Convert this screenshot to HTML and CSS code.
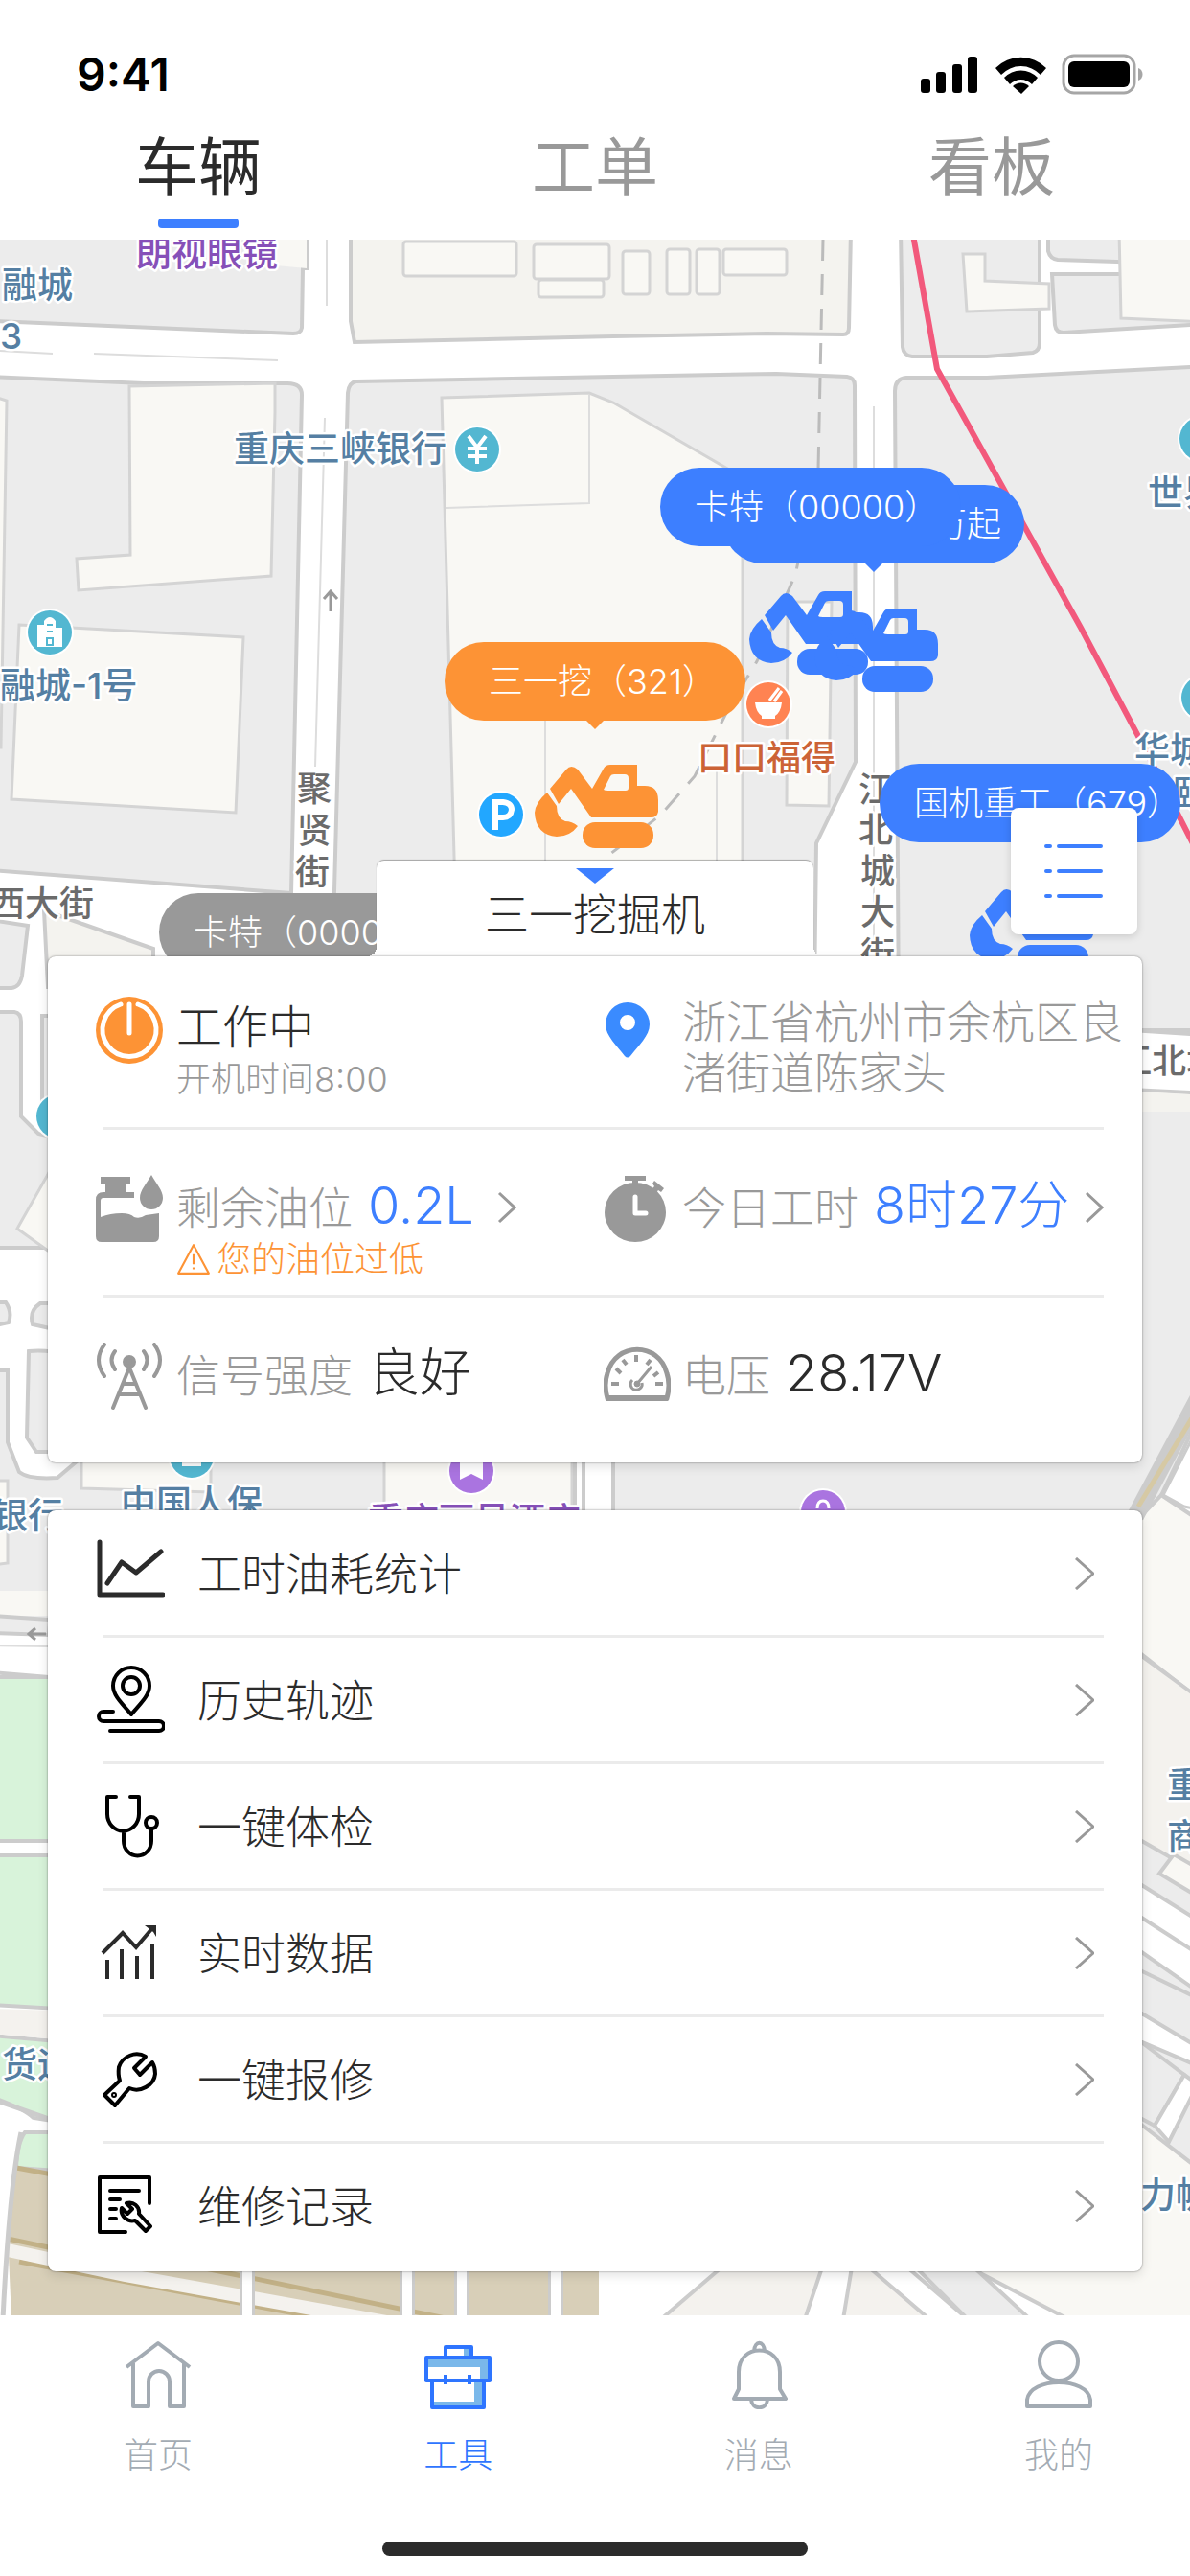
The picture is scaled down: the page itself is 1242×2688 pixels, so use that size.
FILE: index.html
```html
<!DOCTYPE html>
<html lang="zh-CN">
<head>
  <meta charset="UTF-8">
  <meta name="viewport" content="width=device-width, initial-scale=1.0">
  <title>车辆</title>
  <link rel="stylesheet" href="styles.css">
</head>
<body>
  <header class="header">
    <div class="status-bar">
      <span class="time">9:41</span>
      <svg class="status-icons" viewBox="0 0 234 44" aria-hidden="true">
        <rect x="0" y="26" width="10" height="15" rx="3"/>
        <rect x="16" y="19" width="10" height="22" rx="3"/>
        <rect x="33" y="11" width="10" height="30" rx="3"/>
        <rect x="49" y="3" width="10" height="38" rx="3"/>
        <path d="M78 15a37 37 0 0 1 53 0l-6 7a28 28 0 0 0-41 0z"/>
        <path d="M87 25a24 24 0 0 1 35 0l-6 7a16 16 0 0 0-23 0z"/>
        <path d="M96 34a12 12 0 0 1 17 0l-8 8z"/>
        <rect x="149" y="2" width="74" height="39" rx="11" fill="none" stroke="#a6a6a6" stroke-width="3"/>
        <rect x="154" y="8" width="64" height="27" rx="6"/>
        <path d="M227 15c6 2 6 11 0 13z" fill="#a6a6a6"/>
      </svg>
    </div>
    <nav class="tabs">
      <a class="tab active" href="#vehicle">车辆</a>
      <a class="tab" href="#order">工单</a>
      <a class="tab" href="#board">看板</a>
    </nav>
  </header>

  <main class="main">
    <div class="map">
      <svg class="map-canvas" viewBox="0 250 1242 2166" preserveAspectRatio="xMidYMid slice" aria-hidden="true">
        <defs>
          <g id="pin-bg"><circle r="25" fill="#fff"/><circle r="23"/></g>
        </defs>
        <rect y="250" width="1242" height="2166" fill="#fff"/>

        <!-- blocks -->
        <g class="block">
          <path d="M-9 240H321V280H316L315 342Q314 348 306 348L-9 335z"/>
          <path class="pale" d="M366 240V335L370 357L640 351L800 348L880 349Q886 349 886 342L888 240z"/>
          <path d="M-9 393L150 400H300Q315 400 315 412L304 932L-9 908z"/>
          <path d="M363 410Q364 399 372 398L640 393L810 390L884 393Q892 394 892 402L893 795L852 880L850 1040H346z"/>
          <path d="M934 408Q934 395 946 394H1030L1260 382V1075H938z"/>
          <path d="M940 240L942 362Q943 371 952 372H1030L1078 368Q1085 366 1085 358V240z"/>
          <path d="M1094 240V262Q1096 270 1104 271L1260 276V240z"/>
          <path d="M1098 286H1260V338L1110 347Q1102 347 1101 339z"/>
          <path d="M900 1137H1260V1460L1150 1690H380V1500z"/>
          <path d="M-9 960L29 966L23 1018Q21 1030 12 1031H-9z"/>
          <path class="pale" d="M46 950L160 990V1030H50z"/>
          <path d="M-9 1056H15Q22 1057 22 1066V1165L40 1183L70 1190V1302H-9z"/>
          <path d="M44 1060H70V1170H44z"/>
          <path d="M-9 1359H6Q13 1369 9 1380L-9 1384zM42 1360H70V1390L34 1382Q30 1368 42 1360z"/>
          <path d="M30 1410Q50 1408 70 1414V1515H38L28 1500z"/>
          <path d="M-9 1430H8V1505L20 1536Q30 1544 60 1542L86 1520H600V1600H60L51 1706L-9 1704z"/>
          <path d="M1170 1700L1260 1750V2600H1100z"/>
        </g>

        <!-- buildings -->
        <g class="building">
          <path class="flat" d="M288 250H320V280L288 277z"/>
          <rect x="421" y="252" width="118" height="36" rx="3"/>
          <rect x="557" y="255" width="79" height="36" rx="3"/>
          <rect x="562" y="292" width="68" height="18" rx="3"/>
          <rect x="650" y="262" width="28" height="45" rx="3"/>
          <rect x="696" y="260" width="24" height="47" rx="3"/>
          <rect x="727" y="260" width="24" height="47" rx="3"/>
          <rect x="755" y="260" width="66" height="27" rx="3"/>
          <path d="M135 403L287 400V430L283 601L82 616L80 583L136 579z"/>
          <path d="M20 652L254 665L246 848L12 834z"/>
          <path d="M-9 413L7 418L1 780H-9z"/>
          <path d="M461 415L615 410L640 420L775 498V930H475z"/>
          <path class="thin" d="M615 412V525L466 530M569 750V900M748 800V900"/>
          <path d="M822 628H868L865 841L821 840z"/>
          <path d="M1005 265H1028V293L1095 296V322L1009 325z"/>
          <path d="M1168 240H1260V336L1170 332z"/>
          <path d="M70 1190L18 1282L50 1305L80 1310z"/>
          <path d="M85 1520H220V1557L85 1553z"/>
          <path d="M401 1520H597V1600H401z"/>
          <path class="flat" d="M-9 1660H60V1686H-9z"/>
          <path d="M-9 1545H8V1631L-9 1633z"/>
        </g>
        <path class="edge" fill="#fff" d="M600 1520H640V1600H600zM609 1520V1600"/>
        <path class="edge" fill="#fff" d="M1180 1075L1260 1080V1141L1180 1137z"/>
        <path class="flat-pale" d="M1192 1139L1242 1142V1160H1192z"/>

        <!-- road centre lines -->
        <g class="thin">
          <path d="M341 250V319M0 366L55 369M98 369L290 376M339 436L329 800M912 424V1000M-9 1717L51 1718"/>
        </g>
        <path class="edge" fill="none" d="M-9 1686L51 1690M-9 1745L51 1750"/>
        <path class="arrow" d="M345 638V618M338 625L345 617L352 625M48 1705H31M37 1699L30 1705L37 1711"/>

        <!-- park and depot on the left -->
        <g class="edge" fill="#d8f3da">
          <path d="M-9 1750H60V1921H-9zM-9 1936H60V2096L-9 2092z"/>
          <path d="M-9 2124L60 2130V2214L35 2210Q25 2200 -9 2188z"/>
          <path d="M26 2225H60V2265L17 2262Q18 2236 26 2225z"/>
        </g>
        <path fill="#f4f2ee" d="M-9 2096L60 2098V2128L-9 2122z"/>
        <path fill="#d8cfb8" d="M17 2262L625 2350V2420H12L8 2330z"/>
        <path fill="none" stroke="#c2b187" stroke-width="5" d="M17 2262L60 2270M8 2336L60 2347M20 2360L340 2420M190 2362L470 2420"/>
        <path fill="none" stroke="#f4f2ee" stroke-width="14" d="M8 2348L130 2374L420 2426"/>
        <path fill="none" stroke="#ccc" stroke-width="16" d="M258 2360V2420M425 2360V2420M482 2360V2420M580 2360V2420"/>
        <path fill="none" stroke="#fff" stroke-width="10" d="M258 2360V2420M425 2360V2420M482 2360V2420M580 2360V2420"/>
        <path fill="none" stroke="#ccc" stroke-width="5" d="M22 2225Q10 2280 3 2420M-9 2190Q20 2200 60 2214"/>

        <!-- right and bottom edge -->
        <g class="edge" fill="#f9f8f4">
          <path d="M1190 1583L1212 1560L1260 1592V1780L1190 1725z"/>
          <path fill="#f4f2ee" d="M1190 1727L1260 1778V1960L1190 1920z"/>
          <path d="M1210 1955L1225 1935L1260 1955V1985z"/>
          <path fill="#fff" d="M1190 1966L1260 2010V2085L1190 2036z"/>
          <path fill="none" d="M1190 2000L1260 2045"/>
          <path fill="#ececec" d="M1190 2056L1260 2090V2150L1190 2100z"/>
          <path fill="#fff" d="M1190 2100L1260 2142V2160L1190 2130z"/>
          <path fill="#ececec" d="M1190 2130L1236 2165L1205 2218L1190 2210z"/>
          <path fill="#fff" d="M1236 2165L1250 2175L1220 2235L1205 2218z"/>
          <path d="M1190 2216L1260 2270V2420H1115L1000 2360z"/>
          <path fill="#f4f2ee" d="M690 2420L760 2360H900L990 2420z"/>
          <path fill="#fff" d="M860 2360L840 2420H880L890 2360zM900 2360L970 2420H1010L940 2360z"/>
          <path fill="#ececec" d="M950 2360L1010 2420H1075L1010 2360z"/>
        </g>
        <path fill="none" stroke="#ccc" stroke-width="18" d="M1250 1460L1185 1582"/>
        <path fill="none" stroke="#d6c9a4" stroke-width="5" d="M1250 1470L1188 1572"/>
        <path fill="#fff" stroke="#ccc" stroke-width="3" d="M1214 1560L1250 1490V1575L1236 1572z"/>

        <!-- metro and footpath -->
        <path fill="none" stroke="#f2597c" stroke-width="6" d="M953 245L978 385L1128 655L1190 772L1250 890"/>
        <path fill="none" stroke="#bbb" stroke-width="3" stroke-dasharray="22 14" d="M859 250L854 490L830 600L790 690L760 740L725 810L690 850L632 895"/>

        <!-- POIs -->
        <g fill="#53b7d1">
          <use href="#pin-bg" x="498" y="469"/>
          <use href="#pin-bg" x="52" y="660"/>
          <use href="#pin-bg" x="1254" y="458"/>
          <use href="#pin-bg" x="1256" y="728"/>
          <use href="#pin-bg" x="61" y="1165"/>
          <use href="#pin-bg" x="200" y="1519"/>
        </g>
        <use href="#pin-bg" x="523" y="850" fill="#22a7ff"/>
        <use href="#pin-bg" x="802" y="735" fill="#ff8352"/>
        <use href="#pin-bg" x="492" y="1535" fill="#aa74e0"/>
        <use href="#pin-bg" x="859" y="1578" fill="#aa74e0"/>
        <path fill="none" stroke="#fff" stroke-width="4" d="M489 455L498 467L507 455M488 468H508M488 476H508M498 467V484"/>
        <path fill="#fff" d="M39 652H46V648Q52 640 58 648V655H65V675H39z"/>
        <path fill="none" stroke="#53b7d1" stroke-width="2" d="M49 652H55M49 659H55M49 666H55V673H49z"/>
        <path fill="none" stroke="#fff" stroke-width="6" d="M517 866V837H525Q534 838 534 845Q533 853 525 853H518"/>
        <path fill="#fff" d="M788 733H816Q815 743 809 747V750H795V747Q789 743 788 733z"/>
        <path stroke="#fff" stroke-width="3" d="M803 731L813 718M808 732L816 721"/>
        <path fill="#fff" d="M480 1524H504V1544L492 1538L480 1544zM190 1524H210V1530H190z"/>
        <path fill="none" stroke="#fff" stroke-width="3" d="M853 1574Q853 1566 859 1566T865 1574"/>

        <g class="label blue">
          <text x="2" y="311">融城</text>
          <text x="0" y="364">3</text>
          <text x="244" y="482">重庆三峡银行</text>
          <text x="0" y="729">融城-1号</text>
          <text x="1198" y="528">世界</text>
          <text x="1184" y="796">华城</text>
          <text x="1224" y="842">颐</text>
          <text x="-8" y="1595">银行</text>
          <text x="126" y="1582">中国人保</text>
          <text x="2" y="2168">货运</text>
          <text x="1218" y="1876">重</text>
          <text x="1218" y="1930">商</text>
          <text x="1190" y="2304">力帆</text>
        </g>
        <g class="label purple">
          <text x="142" y="278">朗视眼镜</text>
          <text x="384" y="1600">重庆丽呈酒店</text>
        </g>
        <g class="label red"><text x="728" y="804">口口福得</text></g>
        <g class="label grey">
          <text x="-10" y="956">西大街</text>
          <text x="310" y="836">聚</text><text x="310" y="880">贤</text><text x="308" y="923">街</text>
          <text x="896" y="837">江</text><text x="896" y="879">北</text><text x="898" y="922">城</text><text x="898" y="965">大</text><text x="898" y="1009">街</text>
          <text x="1166" y="1120">江北城</text>
        </g>
      </svg>

      <svg class="defs" aria-hidden="true">
        <symbol id="excavator" viewBox="0 0 130 88">
          <path d="M14 30L24 44Q24 57 33 60Q40 60 46 65Q38 76 24 76Q2 74 1 51Q2 40 14 30z"/>
          <path fill-rule="evenodd" d="M17 26L34 6Q39 0 46 6L61 26L73 5Q75 1 80 1H108V23H116Q130 23 130 38V50Q129 56 122 56H60L39 26L26 42zM80 13L73 27Q74 28 78 28H96Q99 28 99 25V15Q99 11 95 11H84Q81 11 80 13z"/>
          <rect x="51" y="61" width="74" height="27" rx="13"/>
        </symbol>
      </svg>
      <svg class="vehicle orange v1"><use href="#excavator"/></svg>
      <svg class="vehicle v2"><use href="#excavator"/></svg>
      <svg class="vehicle v3"><use href="#excavator"/></svg>
      <svg class="vehicle v4"><use href="#excavator"/></svg>

      <button class="marker orange m1">三一挖（321）</button>
      <button class="marker m2">中联万起</button>
      <button class="marker m3">卡特（00000）</button>
      <button class="marker m4">国机重工（679）</button>
      <button class="marker grey m5">卡特（00000）</button>

      <button class="list-button" aria-label="列表">
        <svg viewBox="0 0 62 62"><path d="M2 5H6M15 5H59M2 31H6M15 31H59M2 57H6M15 57H59"/></svg>
      </button>
    </div>

    <h1 class="vehicle-title"><span class="triangle"></span>三一挖掘机</h1>

    <section class="card info">
      <div class="info-row">
        <div class="cell">
          <svg class="icon" viewBox="0 0 70 70">
            <circle cx="35" cy="35" r="35" fill="#fd9335"/>
            <path d="M26 8a28 28 0 1 0 18 0M35 8v30" fill="none" stroke="#fff" stroke-width="5" stroke-linecap="round"/>
          </svg>
          <div>
            <p class="line state">工作中</p>
            <p class="sub">开机时间8:00</p>
          </div>
        </div>
        <div class="cell">
          <svg class="icon" viewBox="0 0 70 70">
            <path fill="#3a8bff" fill-rule="evenodd" d="M25 6a23 23 0 0 1 23 23c0 12-12 22-20 33q-3 3-6 0C14 51 2 41 2 29A23 23 0 0 1 25 6zm0 13a8 8 0 1 0 0 16a8 8 0 0 0 0-16z"/>
          </svg>
          <p class="address">浙江省杭州市余杭区良渚街道陈家头</p>
        </div>
      </div>
      <hr>
      <div class="info-row">
        <a class="cell" href="#oil">
          <svg class="icon" viewBox="0 0 70 70" fill="#999">
            <path d="M5 2H36V10H31V18H40V24H8Q5 24 5 27V44Q15 40 27 40Q36 40 40 44Q46 46 52 42L66 40V64Q66 70 60 70H6Q0 70 0 64V26Q0 18 8 18H10V10H5z"/>
            <path d="M58 0C63 9 70 16 70 24a12 12 0 0 1-24 0C46 16 53 9 58 0z"/>
          </svg>
          <div>
            <p class="line">剩余油位 <strong class="link">0.2L</strong><svg class="chevron" viewBox="0 0 20 34"><path d="M2 2L18 17L2 32"/></svg></p>
            <p class="sub warn"><svg class="alert" viewBox="0 0 34 34"><path d="M17 3L32 31H2zM17 12V22M17 25V27"/></svg>您的油位过低</p>
          </div>
        </a>
        <a class="cell" href="#hours">
          <svg class="icon" viewBox="0 0 70 70" fill="#999">
            <ellipse cx="33" cy="39" rx="32" ry="31"/>
            <path d="M22 1H44V6H36V10H30V6H22zM53 6L63 14L60 18L57 16L54 20L49 16L53 12L51 9z"/>
            <path d="M33 23V40H44" fill="none" stroke="#fff" stroke-width="5" stroke-linecap="round" stroke-linejoin="round"/>
          </svg>
          <p class="line">今日工时 <strong class="link">8时27分</strong><svg class="chevron near" viewBox="0 0 20 34"><path d="M2 2L18 17L2 32"/></svg></p>
        </a>
      </div>
      <hr>
      <div class="info-row">
        <div class="cell">
          <svg class="icon" viewBox="0 0 70 70" fill="none" stroke="#999" stroke-width="4" stroke-linecap="round">
            <circle cx="35" cy="20" r="5" fill="#999"/>
            <path d="M35 26L18 68M35 26L52 68M29 43H41M25 54H45M9 2Q-3 18 9 35M61 2Q73 18 61 35M20 9Q13 18 20 28M50 9Q57 18 50 28"/>
          </svg>
          <p class="line">信号强度 <strong>良好</strong></p>
        </div>
        <div class="cell">
          <svg class="icon" viewBox="0 0 70 70" fill="none" stroke="#999">
            <path d="M4 58Q0 44 4 32C12 -1 58 -1 66 32Q70 44 66 58z" stroke-width="5"/>
            <path d="M3 58H67" stroke-width="6"/>
            <path d="M8 43H16M54 43H62M13 27L18 32M20 18L24 23M34 13V20M49 18L45 23M57 31L52 35" stroke-width="4"/>
            <path d="M35 43L50 25M30 39a6 6 0 1 0 10 3" stroke-width="3"/>
            <circle cx="35" cy="43" r="3" fill="#999"/>
          </svg>
          <p class="line">电压 <strong>28.17V</strong></p>
        </div>
      </div>
    </section>

    <nav class="card menu">
      <a class="menu-item" href="#stat">
        <svg class="menu-icon dark" viewBox="0 0 72 72"><path stroke-width="5" d="M4 3V58H70M12 46L27 24L42 35L68 13"/></svg>
        <span>工时油耗统计</span>
        <svg class="chevron" viewBox="0 0 20 34"><path d="M1 1L19 17L1 33"/></svg>
      </a>
      <a class="menu-item" href="#track">
        <svg class="menu-icon" viewBox="0 0 72 72"><circle cx="37" cy="21" r="9"/><path d="M37 51C29 41 18 32 18 21a19 19 0 0 1 38 0C56 32 45 41 37 51zM18 48H8a5 5 0 0 0 0 10H66a5 5 0 0 1 0 10H15"/></svg>
        <span>历史轨迹</span>
        <svg class="chevron" viewBox="0 0 20 34"><path d="M1 1L19 17L1 33"/></svg>
      </a>
      <a class="menu-item" href="#check">
        <svg class="menu-icon" viewBox="0 0 72 72"><path d="M21 5H12V23a16 17 0 0 0 33 0V5H36M29 41V51a14 15 0 0 0 29 0V39"/><circle cx="58" cy="32" r="6"/></svg>
        <span>一键体检</span>
        <svg class="chevron" viewBox="0 0 20 34"><path d="M1 1L19 17L1 33"/></svg>
      </a>
      <a class="menu-item" href="#live">
        <svg class="menu-icon dark flat" viewBox="0 0 72 72"><path d="M7 36L28 15L42 30L59 10M12 43V63M27 32V63M43 39V63M59 27V63"/><path fill="#2b2b2b" stroke="none" d="M51 7H63V19L60 14z"/></svg>
        <span>实时数据</span>
        <svg class="chevron" viewBox="0 0 20 34"><path d="M1 1L19 17L1 33"/></svg>
      </a>
      <a class="menu-item" href="#repair">
        <svg class="menu-icon" viewBox="0 0 72 72"><path d="M25 37L9 52L20 63L35 45C46 50 61 42 62 30Q62 23 59 18L46 31L40 24L52 12C42 6 28 11 24 23Q23 31 25 37z"/><circle cx="19" cy="52" r="1"/></svg>
        <span>一键报修</span>
        <svg class="chevron" viewBox="0 0 20 34"><path d="M1 1L19 17L1 33"/></svg>
      </a>
      <a class="menu-item" href="#records">
        <svg class="menu-icon" viewBox="0 0 72 72"><path d="M56 33V6H4V63H31M15 20H45M15 29H25M15 39H21M15 49H21M32 33C39 31 46 36 45 44L57 57L52 62L41 51C33 53 25 46 27 38L33 44L38 39z"/></svg>
        <span>维修记录</span>
        <svg class="chevron" viewBox="0 0 20 34"><path d="M1 1L19 17L1 33"/></svg>
      </a>
    </nav>
  </main>

  <footer class="footer">
    <nav class="tab-bar">
      <a class="bar-item" href="#home">
        <svg viewBox="0 0 72 72"><path d="M3 28L36 3L69 28M10 24V69H26V43a11 11 0 0 1 22 0V69H63V24"/></svg>
        首页
      </a>
      <a class="bar-item active" href="#tools">
        <svg viewBox="0 0 72 72">
          <path fill="#7ab8ea" stroke="none" d="M2 18H69V42H63V73H9V64H53V42H59V28H2zM42 7H50V18H42z"/>
          <path d="M23 18V7H50V18M3 18H69V42H3zM9 42V70H63V42M23 36V46M48 36V46"/>
        </svg>
        工具
      </a>
      <a class="bar-item" href="#messages">
        <svg viewBox="0 0 72 72"><path d="M31 11C32 0 41 0 42 11M10 61L15 51V33C15 3 58 3 58 33V51L64 61zM28 62C29 73 44 73 45 62"/></svg>
        消息
      </a>
      <a class="bar-item" href="#me">
        <svg viewBox="0 0 72 72"><circle cx="36" cy="22" r="20"/><path d="M3 69V62C6 38 66 38 69 62V69z"/></svg>
        我的
      </a>
    </nav>
    <div class="home-indicator"></div>
  </footer>
</body>
</html>
```

FILE: styles.css
```css
* {
  margin: 0;
  padding: 0;
  box-sizing: border-box;
}

body {
  font-family: 'Inter', 'Noto Sans CJK SC', sans-serif;
  font-weight: 300;
  background: #ffffff;
  color: #2b2b2b;
  min-height: 100vh;
  display: flex;
  flex-direction: column;
}

a {
  color: inherit;
  text-decoration: none;
}

button {
  font: inherit;
  border: none;
  cursor: pointer;
}

/* header */
.header {
  background: #ffffff;
  padding-bottom: 12px;
}

.status-bar {
  display: flex;
  align-items: center;
  justify-content: space-between;
  height: 126px;
  padding: 30px 47px 0 80px;
}

.time {
  font-size: 48px;
  font-weight: 600;
  line-height: 60px;
  color: #000000;
}

.status-icons {
  width: 234px;
  height: 44px;
}

.tabs {
  display: flex;
}

.tab {
  flex: 1;
  display: flex;
  flex-direction: column;
  align-items: center;
  gap: 6px;
  font-size: 66px;
  font-weight: 400;
  line-height: 96px;
  color: #999999;
}

.tab::after {
  content: '';
  width: 84px;
  height: 10px;
  border-radius: 4px;
}

.tab.active {
  color: #2b2b2b;
}

.tab.active::after {
  background: #3d7fff;
}

/* map */
.main {
  position: relative;
  flex: 1;
  display: flex;
  flex-direction: column;
  justify-content: flex-end;
  min-height: 2166px;
  padding: 0 50px 46px;
  overflow: hidden;
}

.map {
  position: absolute;
  inset: 0;
}

.map-canvas {
  display: block;
  width: 100%;
  height: 100%;
}

.defs {
  position: absolute;
  width: 0;
  height: 0;
}

.block,
.edge {
  stroke: #cccccc;
  stroke-width: 4;
}

.block {
  fill: #ececec;
}

.pale {
  fill: #f4f3ef;
}

.flat-pale {
  fill: #f4f3ef;
}

.building {
  fill: #f9f8f4;
  stroke: #d4d4d4;
  stroke-width: 3;
}

.flat {
  stroke: none;
}

.thin {
  fill: none;
  stroke: #dddddd;
  stroke-width: 2;
}

.arrow {
  fill: none;
  stroke: #999999;
  stroke-width: 3;
}

.label {
  font-size: 37px;
  font-weight: 500;
  stroke: #ffffff;
  stroke-width: 5;
  stroke-linejoin: round;
  paint-order: stroke;
}

.label.blue {
  fill: #557fa3;
}

.label.purple {
  fill: #8650b8;
}

.label.red {
  font-size: 36px;
  fill: #cc6336;
}

.label.grey {
  font-size: 36px;
  fill: #6b6b6b;
}

.vehicle {
  position: absolute;
  width: 130px;
  height: 88px;
  fill: #3d7fff;
}

.vehicle.orange {
  fill: #fd9335;
}

.v1 { left: 557px; top: 547px; }
.v2 { left: 781px; top: 366px; }
.v3 { left: 849px; top: 384px; }
.v4 { left: 1011px; top: 675px; }

.marker {
  position: absolute;
  width: 314px;
  height: 82px;
  padding-left: 36px;
  border-radius: 41px;
  background: #3d7fff;
  color: #ffffff;
  font-size: 36px;
  line-height: 82px;
  white-space: nowrap;
  text-align: left;
}

.marker::after {
  content: '';
  position: absolute;
  left: 50%;
  top: 100%;
  margin-left: -9px;
  border: 9px solid transparent;
  border-top-color: #3d7fff;
  border-bottom: none;
}

.marker.orange {
  padding-left: 46px;
  background: #fd9335;
}

.marker.orange::after {
  border-top-color: #fd9335;
}

.marker.grey {
  background: #999999;
}

.m1 { left: 464px; top: 420px; }
.m2 { left: 755px; top: 256px; padding-right: 24px; text-align: right; }
.m3 { left: 689px; top: 238px; }
.m3::after { display: none; }
.m4 { left: 918px; top: 547px; }
.m5 { left: 166px; top: 682px; }

.list-button {
  position: absolute;
  right: 55px;
  top: 593px;
  display: flex;
  align-items: center;
  justify-content: center;
  width: 132px;
  height: 132px;
  border-radius: 8px;
  background: #ffffff;
  box-shadow: 0 2px 8px rgba(0, 0, 0, 0.15);
}

.list-button svg {
  width: 62px;
  height: 62px;
  fill: none;
  stroke: #3d7fff;
  stroke-width: 4;
  stroke-linecap: round;
}

/* selected vehicle */
.vehicle-title {
  position: relative;
  align-self: center;
  display: flex;
  flex-direction: column;
  align-items: center;
  width: 456px;
  height: 100px;
  padding-top: 8px;
  border-radius: 8px 8px 0 0;
  background: #ffffff;
  box-shadow: 0 -1px 1px rgba(0, 0, 0, 0.3);
  font-size: 46px;
  font-weight: 300;
  line-height: 64px;
}

.vehicle-title::before,
.vehicle-title::after {
  content: '';
  position: absolute;
  bottom: 0;
  width: 10px;
  height: 10px;
}

.vehicle-title::before {
  right: 100%;
  background: radial-gradient(circle at 0 0, transparent 10px, #ffffff 10px);
}

.vehicle-title::after {
  left: 100%;
  background: radial-gradient(circle at 100% 0, transparent 10px, #ffffff 10px);
}

.triangle {
  border: 20px solid transparent;
  border-top: 16px solid #3d7fff;
  border-bottom: none;
}

.card {
  position: relative;
  border-radius: 8px;
  background: #ffffff;
  box-shadow: 0 0 2px rgba(0, 0, 0, 0.5), 0 4px 12px rgba(0, 0, 0, 0.12);
}

.info {
  margin-bottom: 50px;
}

.info hr {
  height: 3px;
  margin: 0 40px 0 58px;
  border: none;
  background: #ebebeb;
}

.info-row {
  display: grid;
  grid-template-columns: 530fr 542fr;
  height: 172px;
  padding: 47px 20px 0 50px;
}

.info-row:first-child {
  height: 178px;
  padding-top: 42px;
}

.cell {
  display: flex;
  align-items: flex-start;
  gap: 14px;
}

.icon {
  flex: none;
  width: 70px;
  height: 70px;
}

.cell + .cell {
  gap: 12px;
}

.line {
  display: flex;
  align-items: baseline;
  gap: 16px;
  font-size: 46px;
  line-height: 64px;
  color: #999999;
  white-space: nowrap;
}

.line strong {
  font-size: 54px;
  font-weight: 300;
  color: #2b2b2b;
}

.line .link {
  color: #3d7fff;
}

.state {
  font-size: 48px;
  color: #2b2b2b;
}

.sub {
  font-size: 36px;
  line-height: 44px;
  color: #999999;
}

.warn {
  display: flex;
  align-items: center;
  gap: 6px;
  color: #fd9335;
}

.alert {
  width: 36px;
  height: 36px;
  fill: none;
  stroke: #fd9335;
  stroke-width: 2;
  stroke-linejoin: round;
}

.address {
  font-size: 46px;
  line-height: 53px;
  color: #999999;
}

.chevron {
  width: 20px;
  height: 34px;
  fill: none;
  stroke: #999999;
  stroke-width: 3;
}

.line .chevron {
  margin-left: 8px;
}

.line .near {
  margin-left: 0;
}

/* menu */
.menu {
  padding-bottom: 2px;
}

.menu-item {
  position: relative;
  display: flex;
  align-items: center;
  gap: 34px;
  height: 132px;
  padding: 0 50px;
  font-size: 46px;
}

.menu-item span {
  flex: 1;
  padding-bottom: 6px;
}

.menu-item + .menu-item::before {
  content: '';
  position: absolute;
  left: 58px;
  right: 40px;
  top: -2px;
  height: 3px;
  background: #ebebeb;
}

.menu-icon {
  width: 72px;
  height: 72px;
  fill: none;
  stroke: #000000;
  stroke-width: 4;
  stroke-linecap: round;
  stroke-linejoin: round;
}

.menu-icon.dark {
  stroke: #2b2b2b;
}

.menu-icon.flat {
  stroke-linecap: butt;
  stroke-linejoin: miter;
}

/* footer */
.footer {
  background: #ffffff;
  padding: 26px 0 21px;
}

.tab-bar {
  display: flex;
  justify-content: space-between;
  padding: 0 101px 0 129px;
}

.bar-item {
  display: flex;
  flex-direction: column;
  align-items: center;
  gap: 24px;
  font-size: 36px;
  line-height: 48px;
  color: #a3abb3;
}

.bar-item.active {
  color: #2e75ff;
}

.bar-item svg {
  width: 72px;
  height: 72px;
  fill: none;
  stroke: currentColor;
  stroke-width: 4;
  stroke-linejoin: round;
}

.home-indicator {
  width: 444px;
  height: 15px;
  margin: 66px auto 0;
  border-radius: 8px;
  background: #2b2b2b;
}
```
